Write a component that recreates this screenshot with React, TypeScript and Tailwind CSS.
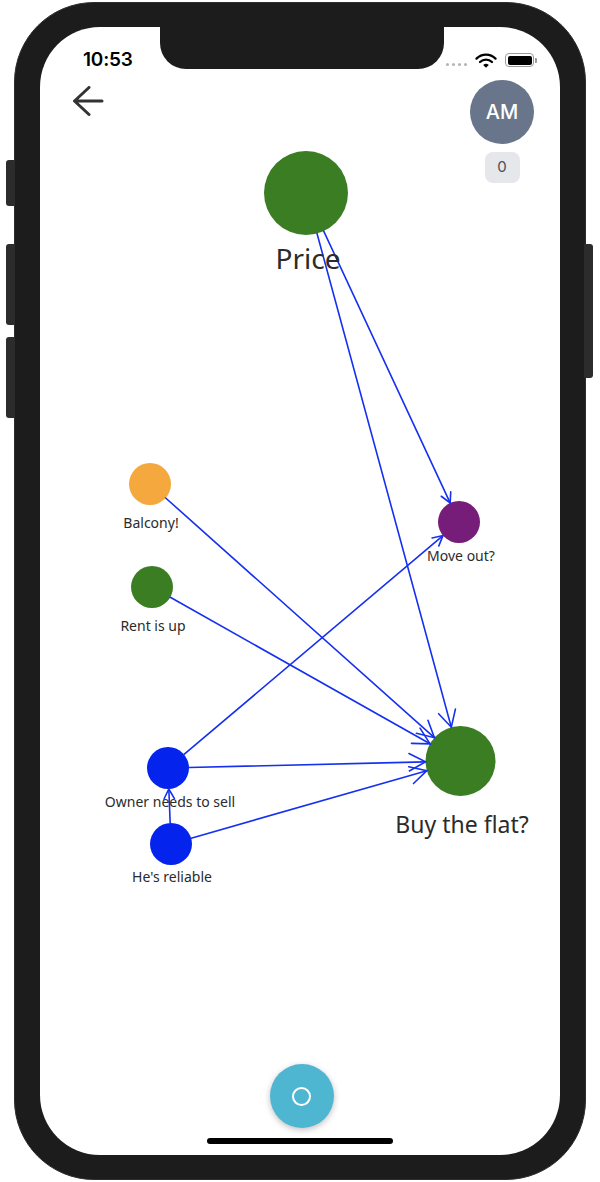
import { ReactNode } from "react";

type GraphNode = {
  id: string;
  x: number;
  y: number;
  r: number;
  color: string;
  label: string;
  size: number;
  labelX: number;
  labelTop: number;
};

// page coordinates, the screen starts at (40, 27)
const OX = 40;
const OY = 27;

const nodes: GraphNode[] = [
  { id: "price", x: 306, y: 193, r: 42, color: "#3a7d23", label: "Price", size: 28, labelX: 308, labelTop: 244 },
  { id: "move", x: 459, y: 522, r: 21, color: "#761d7a", label: "Move out?", size: 14, labelX: 461, labelTop: 549 },
  { id: "balcony", x: 150, y: 484, r: 21, color: "#f4a83d", label: "Balcony!", size: 14, labelX: 151, labelTop: 516 },
  { id: "rent", x: 152, y: 587, r: 21, color: "#3a7d23", label: "Rent is up", size: 14, labelX: 153, labelTop: 619 },
  { id: "owner", x: 168, y: 768, r: 21, color: "#0424ee", label: "Owner needs to sell", size: 14, labelX: 170, labelTop: 795 },
  { id: "reliable", x: 171, y: 844, r: 21, color: "#0424ee", label: "He's reliable", size: 14, labelX: 172, labelTop: 870 },
  { id: "buy", x: 460.5, y: 761, r: 35, color: "#3a7d23", label: "Buy the flat?", size: 23, labelX: 462, labelTop: 813 },
];

const edges: [string, string][] = [
  ["price", "move"],
  ["price", "buy"],
  ["balcony", "buy"],
  ["rent", "buy"],
  ["owner", "move"],
  ["owner", "buy"],
  ["reliable", "buy"],
  ["reliable", "owner"],
];

const byId = (id: string) => nodes.find((n) => n.id === id)!;

const Edge = ({ from, to }: { from: GraphNode; to: GraphNode }) => {
  const dx = to.x - from.x;
  const dy = to.y - from.y;
  const len = Math.sqrt(dx * dx + dy * dy);
  const ux = dx / len;
  const uy = dy / len;
  const sx = from.x + ux * from.r;
  const sy = from.y + uy * from.r;
  const ex = to.x - ux * to.r;
  const ey = to.y - uy * to.r;
  const wing = to.r * 0.53;
  const a = (28 * Math.PI) / 180;
  const bx = -ux;
  const by = -uy;
  const w1x = ex + wing * (bx * Math.cos(a) - by * Math.sin(a));
  const w1y = ey + wing * (bx * Math.sin(a) + by * Math.cos(a));
  const w2x = ex + wing * (bx * Math.cos(-a) - by * Math.sin(-a));
  const w2y = ey + wing * (bx * Math.sin(-a) + by * Math.cos(-a));
  return (
    <g stroke="#1530f0" strokeWidth={1.6} fill="none" strokeLinecap="round">
      <line x1={sx} y1={sy} x2={ex} y2={ey} />
      <polyline points={`${w1x},${w1y} ${ex},${ey} ${w2x},${w2y}`} />
    </g>
  );
};

const Graph = () => (
  <div className="absolute inset-0">
    <svg width={520} height={1128} viewBox={`${OX} ${OY} 520 1128`} className="absolute inset-0">
      {nodes.map((n) => (
        <circle key={n.id} cx={n.x} cy={n.y} r={n.r} fill={n.color} />
      ))}
      {edges.map(([a, b]) => (
        <Edge key={`${a}-${b}`} from={byId(a)} to={byId(b)} />
      ))}
    </svg>
    {nodes.map((n) => (
      <div
        key={n.id}
        className="absolute -translate-x-1/2 whitespace-nowrap leading-none text-[#2b2b2b] font-['Noto_Sans',sans-serif]"
        style={{ left: n.labelX - OX, top: n.labelTop - OY, fontSize: n.size }}
      >
        {n.label}
      </div>
    ))}
  </div>
);

const SideButton = ({ className }: { className: string }): ReactNode => (
  <div className={`absolute w-[9px] bg-[#2c2c2c] ${className}`} />
);

const StatusBar = () => (
  <div className="relative z-10 mt-[20px] flex h-[26px] items-center justify-between pl-[43px] pr-[23px]">
    <span className="font-['Inter',sans-serif] text-[19px] font-semibold tracking-[-0.2px] text-black">10:53</span>
    <div className="flex items-center">
      <div className="mt-[9px] flex gap-[2.5px]">
        <span className="h-[3.5px] w-[3.5px] rounded-full bg-[#b4b4b4]" />
        <span className="h-[3.5px] w-[3.5px] rounded-full bg-[#b4b4b4]" />
        <span className="h-[3.5px] w-[3.5px] rounded-full bg-[#b4b4b4]" />
        <span className="h-[3.5px] w-[3.5px] rounded-full bg-[#b4b4b4]" />
      </div>
      <svg width="22" height="15" viewBox="0 0 22 15" className="ml-[8px]">
        <path d="M1.5 5.6 A13.5 13.5 0 0 1 20.5 5.6" stroke="black" strokeWidth="2.3" fill="none" strokeLinecap="round" />
        <path d="M5 9 A8.6 8.6 0 0 1 17 9" stroke="black" strokeWidth="2.3" fill="none" strokeLinecap="round" />
        <path d="M8.2 12 L11 14.8 L13.8 12 A4 4 0 0 0 8.2 12 Z" fill="black" />
      </svg>
      <div className="ml-[8px] flex items-center">
        <div className="flex h-[14px] w-[29px] items-center rounded-[4px] border border-[#9a9a9a] p-[1.5px]">
          <div className="h-full w-full rounded-[2px] bg-black" />
        </div>
        <div className="ml-[1px] h-[5px] w-[2px] rounded-r-[1px] bg-[#9a9a9a]" />
      </div>
    </div>
  </div>
);

const Header = () => (
  <div className="relative z-10 mt-[7px] flex items-start justify-between pl-[32px] pr-[26px]">
    <svg width="32" height="32" viewBox="0 0 32 32" className="mt-[6px]">
      <path d="M30 15 H3 M17 1.5 L2.5 15 L17 28.5" stroke="#333333" strokeWidth="3" fill="none" strokeLinecap="round" strokeLinejoin="round" />
    </svg>
    <div className="flex flex-col items-center">
      <div className="flex h-[64px] w-[64px] items-center justify-center rounded-full bg-[#68758b] font-['Inter',sans-serif] text-[20px] font-medium text-white">
        AM
      </div>
      <div className="mt-[8px] flex h-[31px] w-[35px] items-center justify-center rounded-[8px] bg-[#e6e7ea] font-['Inter',sans-serif] text-[15px] text-[#4a4f57]">
        0
      </div>
    </div>
  </div>
);

export default function App() {
  return (
    <div className="h-[1182px] w-[600px] bg-white pl-[14px] pt-[2px]">
      <div className="relative h-[1178px] w-[572px] rounded-[80px] border border-[#2e2e2e] bg-[#1c1c1c] pl-[25px] pt-[24px]">
        <SideButton className="-left-[9px] top-[157px] h-[46px] rounded-l-[3px]" />
        <SideButton className="-left-[9px] top-[241px] h-[81px] rounded-l-[3px]" />
        <SideButton className="-left-[9px] top-[334px] h-[81px] rounded-l-[3px]" />
        <SideButton className="-right-[8px] top-[241px] h-[134px] rounded-r-[3px]" />

        <div className="relative flex h-[1128px] w-[520px] flex-col overflow-hidden rounded-[60px] bg-white">
          <Graph />
          <div className="absolute left-[120px] top-0 z-20 h-[42px] w-[284px] rounded-b-[26px] bg-[#1c1c1c]" />
          <StatusBar />
          <Header />
          <div className="flex-1" />
          <div className="relative z-10 flex justify-center pl-[3px]">
            <div className="flex h-[64px] w-[64px] items-center justify-center rounded-full bg-[#4fb6d2] shadow-[0_2px_6px_rgba(0,0,0,0.25)]">
              <div className="h-[19px] w-[19px] rounded-full border-2 border-white" />
            </div>
          </div>
          <div className="relative z-10 mb-[11px] mt-[10px] flex justify-center">
            <div className="h-[6px] w-[186px] rounded-full bg-black" />
          </div>
        </div>
      </div>
    </div>
  );
}
